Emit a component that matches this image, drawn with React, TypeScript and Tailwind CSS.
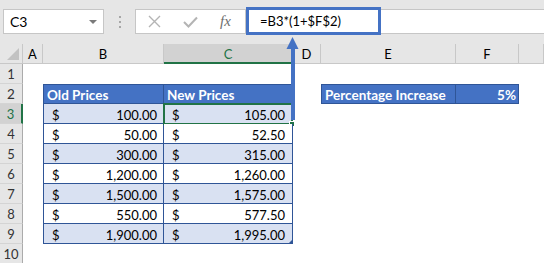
import type { FC } from 'react';

const colWidths = [20, 121, 129, 28, 135, 63, 25];
const colNames = ['A', 'B', 'C', 'D', 'E', 'F', ''];

const oldPrices = ['100.00', '50.00', '300.00', '1,200.00', '1,500.00', '550.00', '1,900.00'];
const newPrices = ['105.00', '52.50', '315.00', '1,260.00', '1,575.00', '577.50', '1,995.00'];

const RowHeader: FC<{ n: number; active?: boolean }> = ({ n, active }) => (
  <div
    className={
      active
        ? 'w-[23px] h-[20px] shrink-0 bg-[#d2d2d2] border-b border-[#d4d4d4] border-r-2 border-r-[#217346] text-[#217346] text-center leading-[20px]'
        : 'w-[23px] h-[20px] shrink-0 bg-[#e6e6e6] border-b border-[#d4d4d4] border-r border-r-[#ababab] text-[#333] text-center leading-[20px]'
    }
  >
    {n}
  </div>
);

const MoneyCell: FC<{ value: string; shaded: boolean; first?: boolean }> = ({ value, shaded, first }) => (
  <div
    className={`${first ? 'w-[121px] border-l pl-[8px] pr-[6px]' : 'w-[129px] pl-[8px] pr-[7px]'} h-[20px] shrink-0 flex justify-between border-r border-b border-[#2f5597] pt-[2px] leading-[18px] text-black ${
      shaded ? 'bg-[#d9e1f2]' : 'bg-white'
    }`}
  >
    <span>$</span>
    <span>{value}</span>
  </div>
);

export default function App() {
  return (
    <div className="relative w-[544px] h-[263px] overflow-hidden bg-white font-['Lato',sans-serif] text-[13px]">
      {/* formula bar */}
      <div className="h-[44px] bg-[#e6e6e6] flex items-start pt-[9px]">
        <div className="ml-[3px] w-[101px] h-[25px] bg-white border border-[#c6c6c6] flex items-center justify-between pl-[6px] pr-[6px] text-[14px] text-black">
          <span>C3</span>
          <svg width="8" height="4" viewBox="0 0 8 4">
            <polygon points="0,0 8,0 4,4" fill="#7a7a7a" />
          </svg>
        </div>
        <div className="w-[31px] h-[25px] flex flex-col items-center justify-center gap-[3px]">
          <div className="w-[2px] h-[2px] bg-[#a6a6a6]" />
          <div className="w-[2px] h-[2px] bg-[#a6a6a6]" />
          <div className="w-[2px] h-[2px] bg-[#a6a6a6]" />
        </div>
        <div className="w-[111px] h-[25px] bg-white border border-[#c6c6c6] flex items-center pl-[12px]">
          <svg width="13" height="13" viewBox="0 0 13 13">
            <path d="M1 1 L12 12 M12 1 L1 12" stroke="#b4b4b4" strokeWidth="1.4" fill="none" />
          </svg>
          <svg width="15" height="12" viewBox="0 0 15 12" className="ml-[22px]">
            <path d="M1 6 L5.5 10.5 L14 1.5" stroke="#b4b4b4" strokeWidth="2" fill="none" />
          </svg>
          <span className="ml-[22px] font-['Liberation_Serif',serif] italic text-[15px] text-[#6e6e6e] leading-none">
            fx
          </span>
        </div>
        <div className="flex-1 h-[25px] bg-white border-y border-[#c6c6c6] pl-[14px] flex items-center text-[13px] text-black">
          =B3*(1+$F$2)
        </div>
      </div>

      {/* column headers */}
      <div className="flex h-[20px]">
        <div className="w-[23px] h-[20px] shrink-0 bg-[#e6e6e6] border-r border-b border-[#c8c8c8] flex items-end justify-end pr-[3px] pb-[3px]">
          <svg width="12" height="12" viewBox="0 0 12 12">
            <polygon points="12,0 12,12 0,12" fill="#c2c2c2" />
          </svg>
        </div>
        {colNames.map((c, i) =>
          c === 'C' ? (
            <div
              key={i}
              style={{ width: colWidths[i] }}
              className="h-[20px] shrink-0 bg-[#d2d2d2] border-r border-[#ababab] border-b-2 border-b-[#217346] text-center leading-[20px] text-[#217346]"
            >
              {c}
            </div>
          ) : (
            <div
              key={i}
              style={{ width: colWidths[i] }}
              className="h-[20px] shrink-0 bg-[#e6e6e6] border-r border-[#c8c8c8] border-b text-center leading-[20px] text-black"
            >
              {c}
            </div>
          )
        )}
      </div>

      {/* row 1 */}
      <div className="flex h-[20px]">
        <RowHeader n={1} />
      </div>

      {/* row 2 */}
      <div className="flex h-[20px] text-[13.5px]">
        <RowHeader n={2} />
        <div className="w-[20px] shrink-0" />
        <div className="w-[121px] h-[20px] shrink-0 bg-[#4472c4] border border-[#2f5597] pl-[3px] pt-[2px] leading-[16px] font-bold text-white">
          Old Prices
        </div>
        <div className="w-[129px] h-[20px] shrink-0 bg-[#4472c4] border-y border-r border-[#2f5597] pl-[3px] pt-[2px] leading-[16px] font-bold text-white">
          New Prices
        </div>
        <div className="w-[28px] shrink-0" />
        <div className="w-[135px] h-[20px] shrink-0 bg-[#4472c4] border border-[#2f5597] pl-[3px] pt-[2px] leading-[16px] font-bold text-white">
          Percentage Increase
        </div>
        <div className="w-[63px] h-[20px] shrink-0 bg-[#4472c4] border-y border-r border-[#2f5597] pr-[2px] pt-[2px] leading-[16px] font-bold text-white text-right">
          5%
        </div>
      </div>

      {/* rows 3-9 */}
      {oldPrices.map((v, i) => {
        const shaded = i % 2 === 0;
        return (
          <div key={i} className="flex h-[20px]">
            <RowHeader n={i + 3} active={i === 0} />
            <div className="w-[20px] shrink-0" />
            <MoneyCell value={v} shaded={shaded} first />
            <div className="relative">
              <MoneyCell value={newPrices[i]} shaded={shaded} />
              {i === 0 && (
                <div className="absolute left-[-1px] top-[-1px] w-[130px] h-[22px] border-2 border-[#217346]">
                  <div className="absolute left-[124px] top-[16px] w-[6px] h-[6px] bg-[#217346] border border-white" />
                </div>
              )}
              {i === oldPrices.length - 1 && (
                <svg width="4" height="4" viewBox="0 0 4 4" className="absolute left-[125px] top-[15px]">
                  <polygon points="4,0 4,4 0,4" fill="#2f5597" />
                </svg>
              )}
            </div>
          </div>
        );
      })}

      {/* row 10 */}
      <div className="flex h-[20px]">
        <RowHeader n={10} />
      </div>

      {/* annotation: formula highlight + arrow */}
      <div className="absolute left-[246px] top-[7px] w-[135px] h-[28px] border-[3px] border-[#4472c4]" />
      <svg width="14" height="86" viewBox="0 0 14 86" className="absolute left-[286px] top-[36px] z-10">
        <polygon points="6.5,1 0.5,13 12.5,13" fill="#4472c4" />
        <rect x="5" y="12" width="4" height="72" fill="#4472c4" />
      </svg>
    </div>
  );
}
